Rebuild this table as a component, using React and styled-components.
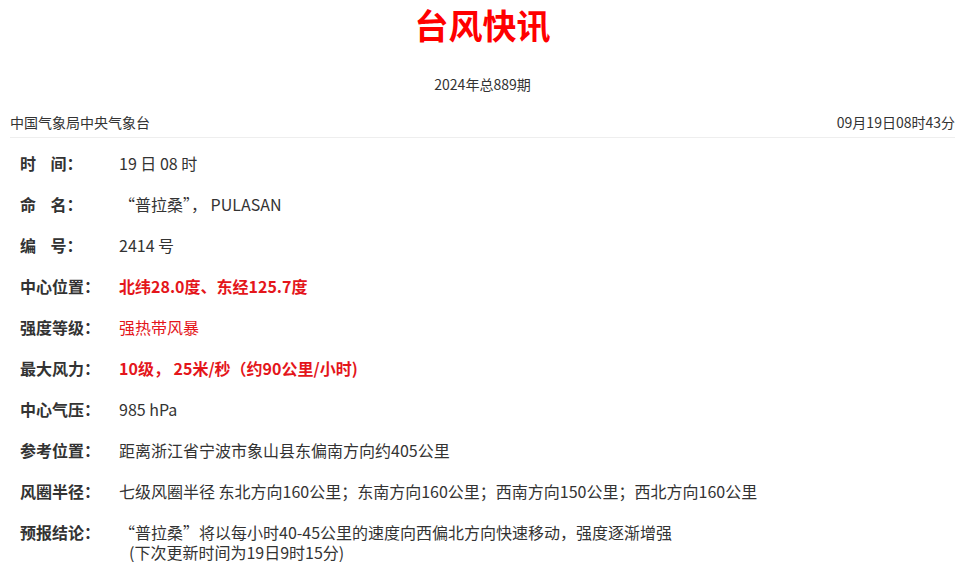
import React from "react";
import styled, { createGlobalStyle } from "styled-components";

const Global = createGlobalStyle`
  html, body { margin: 0; padding: 0; background: #fff; }
  body { font-family: "Noto Sans CJK SC", "Noto Sans", sans-serif; color: #333; }
`;

const Page = styled.div`
  width: 945px;
  margin-left: 10px;
`;

const Title = styled.h1`
  margin: 0;
  padding-top: 4px;
  height: 50px;
  font-size: 34px;
  line-height: 42px;
  font-weight: 700;
  color: #ff0000;
  text-align: center;
`;

const Issue = styled.div`
  margin-top: 20px;
  font-size: 14px;
  line-height: 20px;
  text-align: center;
  color: #333;
`;

const Meta = styled.div`
  margin-top: 18px;
  display: flex;
  justify-content: space-between;
  align-items: center;
  font-size: 14px;
  line-height: 20px;
  padding-bottom: 5px;
  border-bottom: 1px solid #eee;
  color: #333;
`;

const List = styled.div`
  padding: 5px 0 0 10px;
`;

const Row = styled.div`
  display: grid;
  grid-template-columns: 99px 1fr;
  align-items: start;
  min-height: 41px;
  font-size: 16px;
  line-height: 41px;
`;

const Label = styled.div`
  font-weight: 700;
  color: #333;
  white-space: pre;
`;

const Value = styled.div`
  color: ${(p) => (p.$red ? "#e4161b" : "#333")};
  font-weight: ${(p) => (p.$bold ? 700 : 400)};
`;

const Multi = styled.div`
  color: #333;
  line-height: 20px;
  padding-top: 10px;
`;

const Indent = styled.div`
  padding-left: 10px;
`;

const rows = [
  { label: "时\u00a0\u00a0\u00a0\u00a0间：", value: "19 日 08 时" },
  { label: "命\u00a0\u00a0\u00a0\u00a0名：", value: "“普拉桑”， PULASAN" },
  { label: "编\u00a0\u00a0\u00a0\u00a0号：", value: "2414 号" },
  { label: "中心位置：", value: "北纬28.0度、东经125.7度", red: true, bold: true },
  { label: "强度等级：", value: "强热带风暴", red: true },
  { label: "最大风力：", value: "10级， 25米/秒（约90公里/小时)", red: true, bold: true },
  { label: "中心气压：", value: "985 hPa" },
  { label: "参考位置：", value: "距离浙江省宁波市象山县东偏南方向约405公里" },
  {
    label: "风圈半径：",
    value: "七级风圈半径 东北方向160公里；东南方向160公里；西南方向150公里；西北方向160公里",
  },
];

export default function App() {
  return (
    <Page>
      <Global />
      <Title>台风快讯</Title>
      <Issue>2024年总889期</Issue>
      <Meta>
        <span>中国气象局中央气象台</span>
        <span>09月19日08时43分</span>
      </Meta>
      <List>
        {rows.map((r) => (
          <Row key={r.label}>
            <Label>{r.label}</Label>
            <Value $red={r.red} $bold={r.bold}>{r.value}</Value>
          </Row>
        ))}
        <Row>
          <Label>预报结论：</Label>
          <Multi>
            <div>“普拉桑”将以每小时40-45公里的速度向西偏北方向快速移动，强度逐渐增强</div>
            <Indent>(下次更新时间为19日9时15分)</Indent>
          </Multi>
        </Row>
      </List>
    </Page>
  );
}
